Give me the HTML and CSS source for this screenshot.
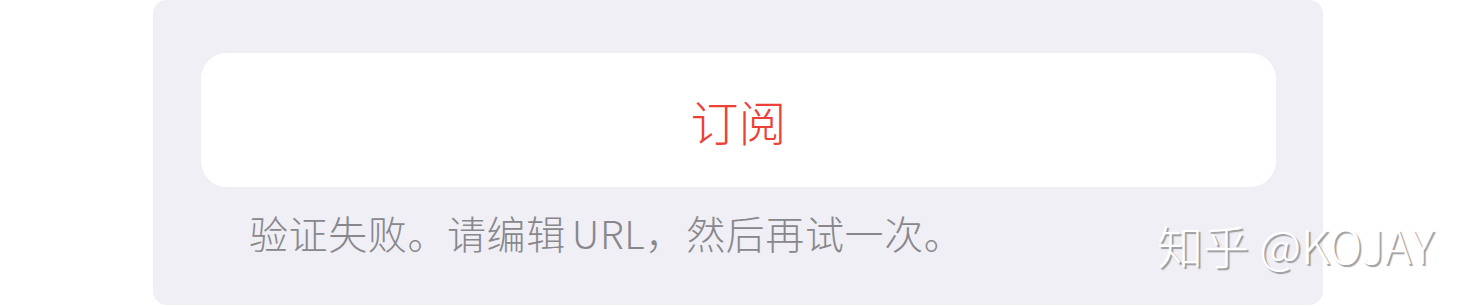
FILE: index.html
```html
<!DOCTYPE html>
<html lang="zh-CN">
<head>
<meta charset="utf-8">
<link rel="stylesheet" href="styles.css">
</head>
<body>
<div class="panel">
  <div class="button">订阅</div>
  <div class="note">验证失败。请编辑<span class="latin">URL</span><span class="comma">，</span>然后再试一次。</div>
</div>
<div class="watermark">知乎 @KOJAY</div>
</body>
</html>
```
FILE: styles.css
```css
html, body {
  margin: 0;
  padding: 0;
  background: #ffffff;
  width: 1476px;
  height: 306px;
  overflow: hidden;
  font-family: "Noto Sans CJK SC", "Noto Sans", sans-serif;
}
.panel {
  position: relative;
  box-sizing: border-box;
  margin-left: 153px;
  width: 1170px;
  height: 305px;
  background: #f0eff5;
  border-radius: 14px;
  padding: 53px 47px 0 48px;
}
.button {
  height: 134px;
  background: #ffffff;
  border-radius: 26px;
  display: flex;
  align-items: center;
  justify-content: center;
  color: #eb4137;
  font-size: 48px;
  font-weight: 300;
  line-height: 1;
}
.note {
  margin-top: 21px;
  padding-left: 48px;
  color: #88878c;
  font-size: 39px;
  font-weight: 300;
  line-height: 48px;
  letter-spacing: 0.6px;
  white-space: nowrap;
}
.latin {
  margin-left: 6px;
}
.comma {
  display: inline-block;
  width: 1.05em;
}
.watermark {
  position: absolute;
  left: 1157px;
  top: 214px;
  font-size: 46px;
  font-weight: 300;
  line-height: 60px;
  color: #ffffff;
  text-shadow: 2px 2px 1px rgba(120, 120, 120, 0.7);
  white-space: nowrap;
}
```
